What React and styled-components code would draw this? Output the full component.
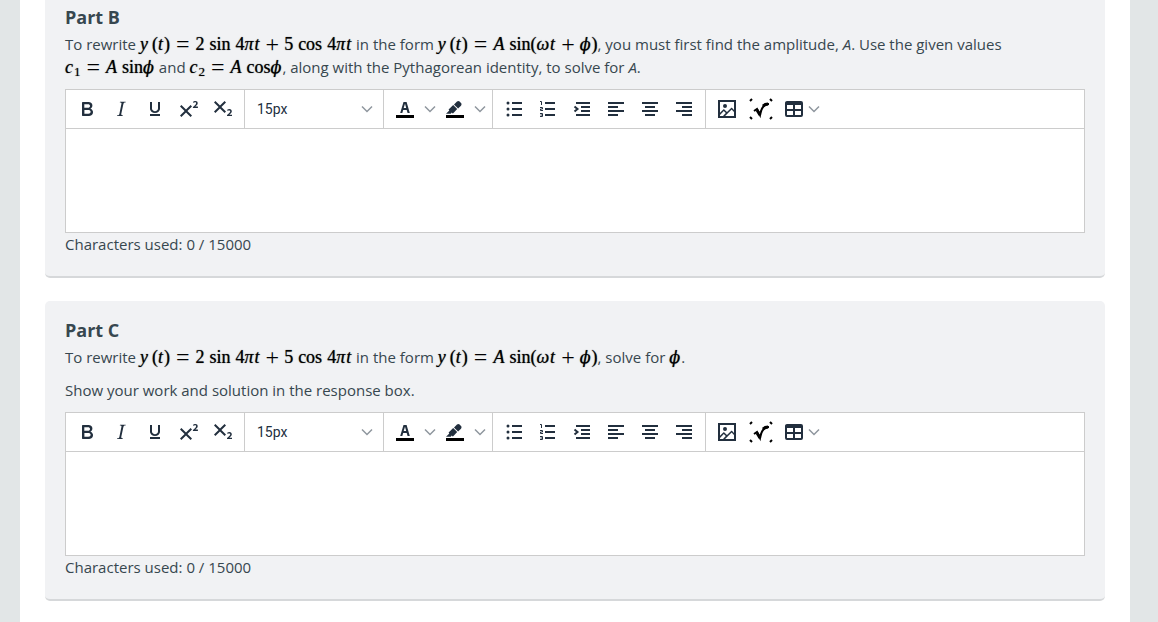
import { useId, useState } from "react";
import styled, { createGlobalStyle } from "styled-components";

const FONT_SIZES = ["12px", "13px", "15px", "18px", "24px"];
const MAX_CHARS = 15000;

const icons = {
    bold: <path d="M7.8 19c-.3 0-.5 0-.6-.2l-.2-.5V5.7c0-.2 0-.4.2-.5l.6-.2h5c1.5 0 2.7.3 3.5 1 .7.6 1.1 1.4 1.1 2.5a3 3 0 0 1-.6 1.9c-.4.6-1 1-1.6 1.2.4.1.9.3 1.3.6s.8.7 1 1.2c.4.4.5 1 .5 1.6 0 1.3-.4 2.3-1.3 3-.8.7-2.1 1-3.8 1H7.8Zm5-8.3c.6 0 1.2-.1 1.6-.5.4-.3.6-.7.6-1.3 0-1.1-.8-1.7-2.3-1.7H9.3v3.5h3.4Zm.5 6c.7 0 1.3-.1 1.7-.4.4-.4.6-.9.6-1.5s-.2-1-.7-1.4c-.4-.3-1-.4-2-.4H9.4v3.8h4Z" />,
    italic: <path d="m16.7 4.7-.1.9h-.3c-.6 0-1 0-1.4.3-.3.3-.4.6-.5 1.1l-2.1 9.8v.6c0 .5.4.8 1.4.8h.2l-.2.8H8l.2-.8h.2c1.1 0 1.8-.5 2-1.5l2-9.8.1-.5c0-.6-.4-.8-1.4-.8h-.3l.2-.9h5.8Z" />,
    underline: <path d="M17 5v6.5a4 4 0 0 1-.4 1.8l-1 1.4a5.3 5.3 0 0 1-7.2 0l-1-1.4a4 4 0 0 1-.4-1.8V5h2v6.5c0 .3 0 .6.2 1l.6.7a3.3 3.3 0 0 0 4.4 0l.6-.8.2-.9V5h2ZM7 17h10v2H7v-2Z" />,
    superscript: <path d="M15 9.4 10.4 14l4.6 4.6-1.4 1.4L9 15.4 4.4 20 3 18.6 7.6 14 3 9.4 4.4 8 9 12.6 13.6 8 15 9.4Zm5.9 1.6h-5v-1l1-.8 1.7-1.6c.3-.5.5-.9.5-1.3 0-.3 0-.5-.2-.7-.2-.2-.5-.3-.9-.3l-.8.2-.7.4-.4-1.2c.2-.2.5-.4 1-.5.3-.2.8-.2 1.2-.2.8 0 1.4.2 1.8.6.4.4.6 1 .6 1.6 0 .5-.2 1-.5 1.5l-1.3 1.4-.6.5h2.6V11Z" />,
    subscript: <path d="m10.4 10 4.6 4.6-1.4 1.4L9 11.4 4.4 16 3 14.6 7.6 10 3 5.4 4.4 4 9 8.6 13.6 4 15 5.4 10.4 10ZM21 19h-5v-1l1-.8 1.7-1.6c.3-.4.5-.8.5-1.2 0-.3 0-.6-.2-.7-.2-.2-.5-.3-.9-.3a2 2 0 0 0-.8.2l-.7.3-.4-1.1 1-.6 1.2-.2c.8 0 1.4.3 1.8.7.4.4.6.9.6 1.5s-.2 1.1-.5 1.6a8 8 0 0 1-1.3 1.3l-.6.6h2.6V19Z" />,
    textColor: (
        <>
            <path fill="#000" d="M3 18h18v3H3z" />
            <path d="M7.2 16 10.5 5h3.1l3.2 11h-2.2l-.9-3h-3.5l-.9 3H7.2Zm3.5-5h2.5L12 6.8 10.7 11Z" />
        </>
    ),
    highlight: (
        <>
            <path fill="#000" d="M3 18h18v3H3z" />
            <path d="M7.7 16.7H3l3.3-3.3-.7-.8L10.2 8l4 4.1-4 4.2c-.2.2-.6.2-.8 0l-.6-.7-1.1 1.1Zm5-7.5L11 7.4l3-2.9a2 2 0 0 1 2.6 0L18 6c.7.7.7 2 0 2.7l-2.9 2.9-1.8-1.8-.6-.6Z" />
        </>
    ),
    bullets: (
        <>
            <path d="M10 5h10v2H10zM10 11h10v2H10zM10 17h10v2H10z" />
            <circle cx="6" cy="6" r="1.5" />
            <circle cx="6" cy="12" r="1.5" />
            <circle cx="6" cy="18" r="1.5" />
        </>
    ),
    numbers: (
        <>
            <path d="M9 5h10v2H9zM9 11h10v2H9zM9 17h10v2H9z" />
            <path fill="none" stroke="currentColor" d="M4 4.5h1.5V8M4 10.5h2.5V12h-2v1.5H7M4 16.5h2.5v3H4M4.5 18h2" />
        </>
    ),
    indent: (
        <>
            <path d="M6 5h14v2H6zM11 9h9v2h-9zM11 13h9v2h-9zM6 17h14v2H6z" />
            <path fill="none" stroke="currentColor" strokeWidth="2" d="m4.5 9.5 3 2.5-3 2.5" />
        </>
    ),
    left: <path d="M4 5h16v2H4zM4 9h10v2H4zM4 13h16v2H4zM4 17h10v2H4z" />,
    center: <path d="M4 5h16v2H4zM7 9h10v2H7zM4 13h16v2H4zM7 17h10v2H7z" />,
    right: <path d="M4 5h16v2H4zM10 9h10v2H10zM4 13h16v2H4zM10 17h10v2H10z" />,
    image: <path fillRule="evenodd" d="m5 15.7 3.3-3.2c.3-.3.7-.3 1 0L12 15l4.1-4c.3-.4.8-.4 1 0l1.9 1.9V5H5v10.7ZM5 18v1h3l2.8-2.9-2-2L5 18Zm14-3-2.4-2.4-6.5 6.4H19v-4ZM3 3h18v18H3V3Zm7 8a2 2 0 1 0 0-4 2 2 0 0 0 0 4Z" />,
    equation: (
        <g fill="none" stroke="#000">
            <path strokeWidth="2" d="m1 4 2-2M21 2l2 2M1 20l2 2M21 22l2-2" />
            <path strokeWidth="2" d="m5 14 3-2 3 6c1-6 3-11 9-11" />
            <path strokeWidth="3" d="m8 13 3 5M14 9c1-1 3-2 5-2" />
        </g>
    ),
    table: <path fillRule="evenodd" d="M19 4a2 2 0 0 1 2 2v12a2 2 0 0 1-2 2H5a2 2 0 0 1-2-2V6c0-1.1.9-2 2-2h14ZM5 14v4h6v-4H5Zm14 0h-6v4h6v-4Zm0-6h-6v4h6V8ZM5 12h6V8H5v4Z" />,
};

function Icon({ name }) {
    return (
        <svg width="24" height="24" viewBox="0 0 24 24" fill="currentColor" aria-hidden="true">
            {icons[name]}
        </svg>
    );
}

function Chevron() {
    return (
        <ChevronSvg viewBox="0 0 12 8" aria-hidden="true">
            <path d="m1 1.5 5 5 5-5" fill="none" stroke="currentColor" strokeWidth="1.5" />
        </ChevronSvg>
    );
}

function Tool({ name, label }) {
    return (
        <ToolButton type="button" aria-label={label}>
            <Icon name={name} />
        </ToolButton>
    );
}

function Editor({ label }) {
    const id = useId();
    const [text, setText] = useState("");
    const [size, setSize] = useState("15px");

    return (
        <>
            <EditorBox>
                <Toolbar role="toolbar" aria-label="Formatting">
                    <Group>
                        <Tool name="bold" label="Bold" />
                        <Tool name="italic" label="Italic" />
                        <Tool name="underline" label="Underline" />
                        <Tool name="superscript" label="Superscript" />
                        <Tool name="subscript" label="Subscript" />
                    </Group>
                    <Group>
                        <SelectWrapper>
                            <SizeSelect aria-label="Font size" value={size} onChange={(e) => setSize(e.target.value)}>
                                {FONT_SIZES.map((s) => (
                                    <option key={s} value={s}>{s}</option>
                                ))}
                            </SizeSelect>
                            <Chevron />
                        </SelectWrapper>
                    </Group>
                    <Group>
                        <Tool name="textColor" label="Text color" />
                        <MenuButton type="button" aria-label="Text color menu"><Chevron /></MenuButton>
                        <Tool name="highlight" label="Background color" />
                        <MenuButton type="button" aria-label="Background color menu"><Chevron /></MenuButton>
                    </Group>
                    <Group>
                        <Tool name="bullets" label="Bullet list" />
                        <Tool name="numbers" label="Numbered list" />
                        <Tool name="indent" label="Increase indent" />
                        <Tool name="left" label="Align left" />
                        <Tool name="center" label="Align center" />
                        <Tool name="right" label="Align right" />
                    </Group>
                    <Group>
                        <Tool name="image" label="Insert image" />
                        <Tool name="equation" label="Insert equation" />
                        <TableButton type="button" aria-label="Table">
                            <Icon name="table" />
                            <Chevron />
                        </TableButton>
                    </Group>
                </Toolbar>
                <TextArea
                    aria-label={label}
                    aria-describedby={id}
                    maxLength={MAX_CHARS}
                    value={text}
                    $size={size}
                    onChange={(e) => setText(e.target.value)}
                />
            </EditorBox>
            <div id={id}>Characters used: {text.length} / {MAX_CHARS}</div>
        </>
    );
}

/* y(t) = */
function YofT() {
    return (
        <>
            <Var>y</Var><Paren $open>(</Paren><Var>t</Var><Paren>)</Paren><Op>=</Op>
        </>
    );
}

function WaveSum() {
    return (
        <Formula>
            <YofT />
            2<Fn>sin</Fn>4<Var>π</Var><Var>t</Var><Op $binary>+</Op>5<Fn>cos</Fn>4<Var>π</Var><Var>t</Var>
        </Formula>
    );
}

function WaveForm() {
    return (
        <Formula>
            <YofT />
            <Var>A</Var><Fn $tight>sin</Fn><Paren>(</Paren><Var>ω</Var><Var>t</Var><Op $binary>+</Op><Phi>ϕ</Phi><Paren>)</Paren>
        </Formula>
    );
}

function Coefficient({ index, fn }) {
    return (
        <Formula>
            <Var>c</Var><Sub>{index}</Sub><Op>=</Op><Var>A</Var><Fn $tight>{fn}</Fn><Phi>ϕ</Phi>
        </Formula>
    );
}

function App() {
    return (
        <>
            <GlobalStyle />
            <Page>
                <Sheet>
                    <Card $continued>
                        <Title>Part B</Title>
                        <Text>
                            To rewrite <WaveSum /> in the form <WaveForm />, you must first find the amplitude, <em>A</em>. Use
                            the given values <Coefficient index="1" fn="sin" /> and <Coefficient index="2" fn="cos" />, along
                            with the Pythagorean identity, to solve for <em>A</em>.
                        </Text>
                        <Editor label="Part B response" />
                    </Card>
                    <Card>
                        <Title>Part C</Title>
                        <Text>
                            To rewrite <WaveSum /> in the form <WaveForm />, solve for <Formula><Phi>ϕ</Phi></Formula>.
                        </Text>
                        <Text>Show your work and solution in the response box.</Text>
                        <Editor label="Part C response" />
                    </Card>
                </Sheet>
            </Page>
        </>
    );
}
export default App;

const GlobalStyle = createGlobalStyle`
  * {
    box-sizing: border-box;
  }
  body {
    margin: 0;
    background: #e2e6e7;
    color: #37474f;
    font-family: "Open Sans", "Noto Sans", sans-serif;
    font-size: 15px;
    line-height: 23px;
  }
`;

const Page = styled.main`
  min-height: 100vh;
  display: flex;
  padding: 0 28px 0 20px;
`;

const Sheet = styled.div`
  flex: 1;
  min-width: 0;
  display: flex;
  flex-direction: column;
  gap: 23px;
  padding: 0 25px 21px;
  background: #fff;
`;

const Card = styled.section`
  padding: ${(p) => (p.$continued ? "4px" : "16px")} 20px 20px;
  background: #f1f2f4;
  border-bottom: 2px solid #d6d8da;
  border-radius: ${(p) => (p.$continued ? "0 0 5px 5px" : "5px")};
`;

const Title = styled.h2`
  margin: 0 0 2px;
  font-size: 18px;
  line-height: 27px;
  font-weight: 700;
`;

const Text = styled.p`
  margin: 0 0 10px;
`;

const Formula = styled.span`
  white-space: nowrap;
  color: #000;
  font-family: "Liberation Serif", serif;
  font-size: 18px;
  line-height: 1;
  text-shadow: 0 0 1px rgba(0, 0, 0, 0.7);
`;

const Var = styled.i`
  padding-right: 1px;
`;

const Phi = styled.i`
  padding-right: 1px;
  font-family: "DejaVu Serif", serif;
  font-size: 16px;
`;

const Paren = styled.span`
  margin-left: ${(p) => (p.$open ? "3px" : "0")};
`;

const Op = styled.span`
  margin: 0 ${(p) => (p.$binary ? "5px" : "6px")};
  font-size: 24px;
  line-height: 0;
  vertical-align: -2px;
  text-shadow: none;
`;

const Fn = styled.span`
  margin: 0 ${(p) => (p.$tight ? "0 0 4px" : "5px")};
`;

const Sub = styled.sub`
  font-size: 13px;
  line-height: 0;
  vertical-align: -3px;
`;

const EditorBox = styled.div`
  background: #fff;
  border: 1px solid #ccc;
`;

const Toolbar = styled.div`
  display: flex;
  flex-wrap: wrap;
  border-bottom: 1px solid #ccc;
  color: #222f3e;
`;

const Group = styled.div`
  display: flex;
  align-items: center;
  height: 38px;
  padding: 0 4px;
  border-right: 1px solid #ccc;
  &:last-child {
    border-right: none;
  }
`;

const ToolButton = styled.button`
  display: flex;
  align-items: center;
  justify-content: center;
  width: 34px;
  height: 34px;
  padding: 0;
  border: none;
  border-radius: 3px;
  background: none;
  color: inherit;
  cursor: pointer;
  &:hover {
    background: #dee0e2;
  }
`;

const MenuButton = styled(ToolButton)`
  width: 16px;
`;

const TableButton = styled(ToolButton)`
  width: 50px;
  justify-content: flex-start;
  gap: 2px;
  padding-left: 4px;
`;

const ChevronSvg = styled.svg`
  flex: none;
  width: 12px;
  height: 8px;
  color: #8f969e;
  pointer-events: none;
`;

const SelectWrapper = styled.div`
  display: flex;
  align-items: center;
  width: 130px;
  padding: 0 6px 0 8px;
`;

const SizeSelect = styled.select`
  appearance: none;
  flex: 1;
  height: 34px;
  margin-right: -12px;
  padding: 0;
  border: none;
  background: none;
  color: inherit;
  font-family: Roboto, sans-serif;
  font-size: 14px;
`;

const TextArea = styled.textarea`
  display: block;
  width: 100%;
  height: 103px;
  padding: 10px;
  border: none;
  outline: none;
  resize: none;
  color: inherit;
  font-family: inherit;
  font-size: ${(p) => p.$size};
`;
